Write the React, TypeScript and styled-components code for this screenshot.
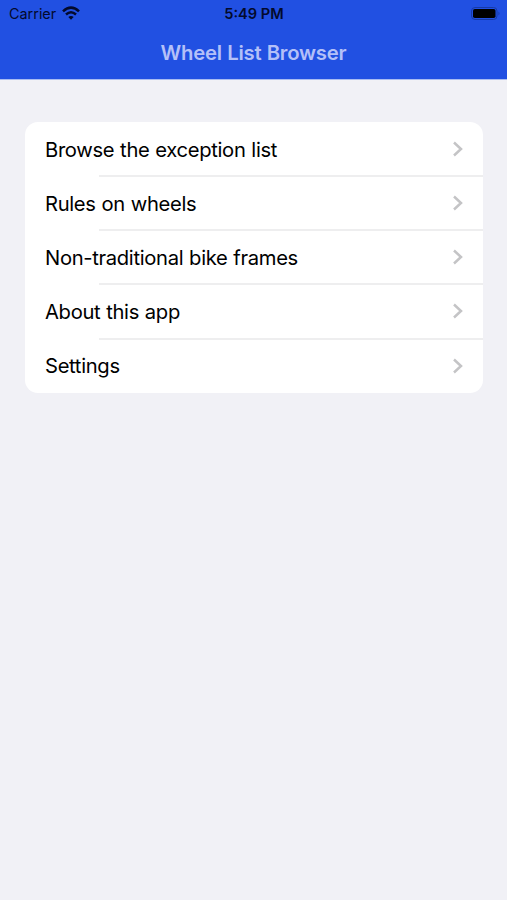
import React from "react";
import styled, { createGlobalStyle } from "styled-components";

const GlobalStyle = createGlobalStyle`
  * { box-sizing: border-box; }
  body { margin: 0; background: #f1f1f6; font-family: Inter, "Liberation Sans", sans-serif; }
`;

const Screen = styled.div`
  min-height: 900px;
  background: #f1f1f6;
  color: #000;
`;

const Header = styled.header`
  height: 80px;
  background: #2150e2;
  border-bottom: 1px solid #a9bcf2;
`;

const StatusBar = styled.div`
  height: 27px;
  padding: 0 7px 0 9px;
  display: grid;
  grid-template-columns: 1fr auto 1fr;
  align-items: center;
  color: #030a2c;
`;

const Carrier = styled.div`
  display: flex;
  align-items: center;
  gap: 6px;
  font-size: 14.4px;
  line-height: 27px;
`;

const WifiIcon = styled.svg`
  margin-top: -2px;
`;

const Clock = styled.time`
  font-size: 14.6px;
  font-weight: 600;
  margin-right: 1px;
`;

const Battery = styled.svg`
  justify-self: end;
  margin-right: -1px;
`;

const Title = styled.h1`
  margin: 0;
  height: 52px;
  line-height: 51px;
  text-align: center;
  font-size: 20.3px;
  font-weight: 600;
  letter-spacing: -0.2px;
  word-spacing: 0.3px;
  color: #b4c0f8;
`;

const List = styled.nav`
  margin: 42px 24px 0 25px;
  background: #fff;
  border-radius: 13px;
  overflow: hidden;
`;

const Row = styled.div`
  height: 54.15px;
  padding: 0 20px;
  display: flex;
  align-items: center;
  justify-content: space-between;
`;

const Label = styled.span`
  font-size: 20.2px;
  letter-spacing: -0.32px;
  word-spacing: 0.5px;
`;

const Divider = styled.div`
  height: 2px;
  margin: -1px 0 -1px 74px;
  background: #eeeeef;
`;

const items = [
  "Browse the exception list",
  "Rules on wheels",
  "Non-traditional bike frames",
  "About this app",
  "Settings",
];

export default function App() {
  return (
    <Screen>
      <GlobalStyle />
      <Header>
        <StatusBar>
          <Carrier>
            <span>Carrier</span>
            <WifiIcon width="18" height="14" viewBox="0 0 18 14" fill="none" stroke="currentColor" strokeWidth="2.5">
              <path d="M1 5.4 Q9 -2.2 17 5.4" />
              <path d="M4 8.5 Q9 4 14 8.5" />
              <path d="M9 13.8 L6.3 11 Q9 8.8 11.7 11Z" fill="currentColor" stroke="none" />
            </WifiIcon>
          </Carrier>
          <Clock>5:49 PM</Clock>
          <Battery width="30" height="13" viewBox="0 0 30 13">
            <rect x=".5" y=".5" width="25.5" height="12" rx="3.5" fill="none" stroke="#173aa6" />
            <rect x="2" y="2" width="22.5" height="9" rx="1.8" fill="#000" />
            <path d="M27.5 4.5q2 2 0 4z" fill="#173aa6" />
          </Battery>
        </StatusBar>
        <Title>Wheel List Browser</Title>
      </Header>
      <List>
        {items.map((item, i) => (
          <React.Fragment key={item}>
            {i > 0 && <Divider />}
            <Row>
              <Label>{item}</Label>
              <svg width="10" height="16" viewBox="0 0 10 16" fill="none" stroke="#c4c4c6" strokeWidth="2.5">
                <path d="M1 1.5 L8 8 L1 14.5" />
              </svg>
            </Row>
          </React.Fragment>
        ))}
      </List>
    </Screen>
  );
}
